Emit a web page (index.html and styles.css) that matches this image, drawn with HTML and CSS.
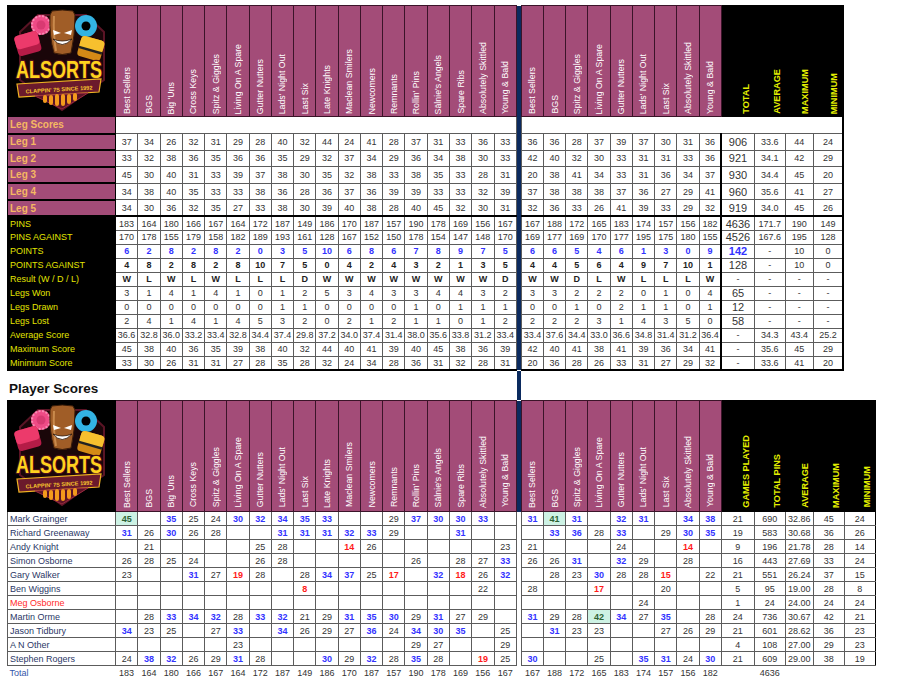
FILE: index.html
```html
<!DOCTYPE html>
<html lang="en">
<head>
<meta charset="utf-8">
<title>Alsorts Skittles - Scores</title>
<link rel="stylesheet" href="styles.css">
</head>
<body>
<table class="grid t1">
<colgroup><col class="lab"><col class="c"><col class="c"><col class="c"><col class="c"><col class="c"><col class="c"><col class="c"><col class="c"><col class="c"><col class="c"><col class="c"><col class="c"><col class="c"><col class="c"><col class="c"><col class="c"><col class="c"><col class="c"><col class="sp"><col class="d"><col class="d"><col class="d"><col class="d"><col class="d"><col class="d"><col class="d"><col class="d"><col class="d"><col class="w33"><col class="w31"><col class="w28"><col class="w30"></colgroup>
<thead>
<tr class="hdr"><th class="logo"><svg viewBox="0 0 107 110" width="107" height="110" role="img" aria-label="Alsorts logo">
<path d="M12 26 L30 9 L78 9 L96 26 L96 74 L54 104 L12 74 Z" fill="#1a0609" stroke="#5a1425" stroke-width="2"/>
<circle cx="33" cy="19" r="10" fill="#ef4b86"/><circle cx="33" cy="19" r="9" fill="none" stroke="#f88bb3" stroke-width="2" stroke-dasharray="2 1.6"/><circle cx="33" cy="19" r="4.5" fill="#d93a72"/>
<g transform="rotate(-16 20 38)"><rect x="8" y="27" width="24" height="21" rx="4" fill="#b51c47"/><rect x="8" y="27" width="24" height="14" rx="4" fill="#ec3a6b"/></g>
<circle cx="78" cy="20" r="11" fill="#33b3e3"/><circle cx="78" cy="20" r="4.5" fill="#000"/>
<g transform="rotate(16 83 42)"><rect x="71" y="32" width="24" height="21" rx="4" fill="#d48a16"/><rect x="71" y="32" width="24" height="13" rx="4" fill="#f7c02e"/><rect x="71" y="43" width="24" height="2.5" fill="#222"/></g>
<path d="M44 5 Q54 3 65 5 L67 9 Q67 30 63 47 Q54 50 46 47 Q41 30 42 9 Z" fill="#a05d27" stroke="#3a1c08" stroke-width="1"/>
<path d="M46 10 Q45 28 48 45" stroke="#c98a4c" stroke-width="2" fill="none"/>
<path d="M45 24 L53 27 L46 29 Z" fill="#fff"/><path d="M64 24 L56 27 L63 29 Z" fill="#fff"/>
<path d="M45 33 Q54 44 64 33 Q54 37 45 33 Z" fill="#fff" stroke="#2a1204" stroke-width="0.8"/>
<text x="51" y="55.4" transform="scale(1 1.3)" text-anchor="middle" font-family="Liberation Sans, Arial, sans-serif" font-weight="bold" font-size="18" fill="#ffd21e" stroke="#4b0e1c" stroke-width="1.8" paint-order="stroke" stroke-linejoin="round">ALSORTS</text>
<path d="M9 78 L93 73 L91 86 L11 91 Z" fill="#6b1a2c" stroke="#f0b323" stroke-width="1.2"/>
<text x="51" y="85.5" text-anchor="middle" font-family="Liberation Sans, Arial, sans-serif" font-weight="bold" font-size="5.6" fill="#f6c42c" transform="rotate(-3.5 51 83)">CLAPPIN' 7S SINCE 1992</text>
<path d="M27 90 L80 87 L54 103 Z" fill="#5b1326" stroke="#9a2a40" stroke-width="1"/>
<g fill="#f39a1c"><rect x="35" y="89" width="4" height="8" rx="2"/><rect x="41" y="89" width="4" height="10" rx="2"/><rect x="47" y="88" width="4" height="12" rx="2"/><rect x="53" y="88" width="4" height="12" rx="2"/><rect x="59" y="88" width="4" height="10" rx="2"/><rect x="65" y="87" width="4" height="8" rx="2"/></g>
</svg></th><th class="h"><div class="rot">Best Sellers</div></th><th class="h"><div class="rot">BGS</div></th><th class="h"><div class="rot">Big 'Uns</div></th><th class="h"><div class="rot">Cross Keys</div></th><th class="h"><div class="rot">Spitz &amp; Giggles</div></th><th class="h"><div class="rot">Living On A Spare</div></th><th class="h"><div class="rot">Gutter Nutters</div></th><th class="h"><div class="rot">Lads' Night Out</div></th><th class="h"><div class="rot">Last Six</div></th><th class="h"><div class="rot">Late Knights</div></th><th class="h"><div class="rot">Maclean Smilers</div></th><th class="h"><div class="rot">Newcomers</div></th><th class="h"><div class="rot">Remnants</div></th><th class="h"><div class="rot">Rollin' Pins</div></th><th class="h"><div class="rot">Sälnie's Angels</div></th><th class="h"><div class="rot">Spare Ribs</div></th><th class="h"><div class="rot">Absolutely Skittled</div></th><th class="h"><div class="rot">Young &amp; Bald</div></th><th class="sep"></th><th class="h"><div class="rot">Best Sellers</div></th><th class="h"><div class="rot">BGS</div></th><th class="h"><div class="rot">Spitz &amp; Giggles</div></th><th class="h"><div class="rot">Living On A Spare</div></th><th class="h"><div class="rot">Gutter Nutters</div></th><th class="h"><div class="rot">Lads' Night Out</div></th><th class="h"><div class="rot">Last Six</div></th><th class="h"><div class="rot">Absolutely Skittled</div></th><th class="h"><div class="rot">Young &amp; Bald</div></th><th class="k"><div class="rot">TOTAL</div></th><th class="k"><div class="rot">AVERAGE</div></th><th class="k"><div class="rot">MAXIMUM</div></th><th class="k"><div class="rot">MINIMUM</div></th></tr>
</thead>
<tbody>
<tr class="ls"><th class="lab">Leg Scores</th><td class="blank" colspan="18"></td><td class="sep"></td><td class="blank" colspan="13"></td></tr>
<tr class="leg v"><th class="lab">Leg 1</th><td>37</td><td>34</td><td>26</td><td>32</td><td>31</td><td>29</td><td>28</td><td>40</td><td>32</td><td>44</td><td>24</td><td>41</td><td>28</td><td>37</td><td>31</td><td>33</td><td>36</td><td>33</td><td class="sep"></td><td>36</td><td>36</td><td>28</td><td>37</td><td>39</td><td>37</td><td>30</td><td>31</td><td>36</td><td>906</td><td>33.6</td><td>44</td><td>24</td></tr>
<tr class="leg v"><th class="lab">Leg 2</th><td>33</td><td>32</td><td>38</td><td>36</td><td>35</td><td>36</td><td>36</td><td>35</td><td>29</td><td>32</td><td>37</td><td>34</td><td>29</td><td>36</td><td>34</td><td>38</td><td>30</td><td>33</td><td class="sep"></td><td>42</td><td>40</td><td>32</td><td>30</td><td>33</td><td>31</td><td>31</td><td>33</td><td>36</td><td>921</td><td>34.1</td><td>42</td><td>29</td></tr>
<tr class="leg v"><th class="lab">Leg 3</th><td>45</td><td>30</td><td>40</td><td>31</td><td>33</td><td>39</td><td>37</td><td>38</td><td>30</td><td>35</td><td>32</td><td>38</td><td>33</td><td>38</td><td>35</td><td>33</td><td>28</td><td>31</td><td class="sep"></td><td>20</td><td>38</td><td>41</td><td>34</td><td>33</td><td>31</td><td>36</td><td>34</td><td>37</td><td>930</td><td>34.4</td><td>45</td><td>20</td></tr>
<tr class="leg v"><th class="lab">Leg 4</th><td>34</td><td>38</td><td>40</td><td>35</td><td>33</td><td>33</td><td>38</td><td>36</td><td>28</td><td>36</td><td>37</td><td>36</td><td>39</td><td>39</td><td>33</td><td>33</td><td>32</td><td>39</td><td class="sep"></td><td>37</td><td>38</td><td>38</td><td>38</td><td>37</td><td>36</td><td>27</td><td>29</td><td>41</td><td>960</td><td>35.6</td><td>41</td><td>27</td></tr>
<tr class="leg v l5"><th class="lab">Leg 5</th><td>34</td><td>30</td><td>36</td><td>32</td><td>35</td><td>27</td><td>33</td><td>38</td><td>30</td><td>39</td><td>40</td><td>38</td><td>28</td><td>40</td><td>45</td><td>32</td><td>30</td><td>31</td><td class="sep"></td><td>32</td><td>36</td><td>33</td><td>26</td><td>41</td><td>39</td><td>33</td><td>29</td><td>32</td><td>919</td><td>34.0</td><td>45</td><td>26</td></tr>
<tr class="st v"><th class="sl">PINS</th><td>183</td><td>164</td><td>180</td><td>166</td><td>167</td><td>164</td><td>172</td><td>187</td><td>149</td><td>186</td><td>170</td><td>187</td><td>157</td><td>190</td><td>178</td><td>169</td><td>156</td><td>167</td><td class="sep"></td><td>167</td><td>188</td><td>172</td><td>165</td><td>183</td><td>174</td><td>157</td><td>156</td><td>182</td><td>4636</td><td>171.7</td><td>190</td><td>149</td></tr>
<tr class="st v"><th class="sl">PINS AGAINST</th><td>170</td><td>178</td><td>155</td><td>179</td><td>158</td><td>182</td><td>189</td><td>193</td><td>161</td><td>128</td><td>167</td><td>152</td><td>150</td><td>178</td><td>154</td><td>147</td><td>148</td><td>170</td><td class="sep"></td><td>169</td><td>177</td><td>169</td><td>170</td><td>177</td><td>195</td><td>175</td><td>180</td><td>155</td><td>4526</td><td>167.6</td><td>195</td><td>128</td></tr>
<tr class="st v pts"><th class="sl">POINTS</th><td>6</td><td>2</td><td>8</td><td>2</td><td>8</td><td>2</td><td>0</td><td>3</td><td>5</td><td>10</td><td>6</td><td>8</td><td>6</td><td>7</td><td>8</td><td>9</td><td>7</td><td>5</td><td class="sep"></td><td>6</td><td>6</td><td>5</td><td>4</td><td>6</td><td>1</td><td>3</td><td>0</td><td>9</td><td>142</td><td>-</td><td>10</td><td>0</td></tr>
<tr class="st v bold"><th class="sl">POINTS AGAINST</th><td>4</td><td>8</td><td>2</td><td>8</td><td>2</td><td>8</td><td>10</td><td>7</td><td>5</td><td>0</td><td>4</td><td>2</td><td>4</td><td>3</td><td>2</td><td>1</td><td>3</td><td>5</td><td class="sep"></td><td>4</td><td>4</td><td>5</td><td>6</td><td>4</td><td>9</td><td>7</td><td>10</td><td>1</td><td>128</td><td>-</td><td>10</td><td>0</td></tr>
<tr class="st v bold"><th class="sl">Result (W / D / L)</th><td>W</td><td>L</td><td>W</td><td>L</td><td>W</td><td>L</td><td>L</td><td>L</td><td>D</td><td>W</td><td>W</td><td>W</td><td>W</td><td>W</td><td>W</td><td>W</td><td>W</td><td>D</td><td class="sep"></td><td>W</td><td>W</td><td>D</td><td>L</td><td>W</td><td>L</td><td>L</td><td>L</td><td>W</td><td class="dash">-</td><td>-</td><td>-</td><td>-</td></tr>
<tr class="st v"><th class="sl">Legs Won</th><td>3</td><td>1</td><td>4</td><td>1</td><td>4</td><td>1</td><td>0</td><td>1</td><td>2</td><td>5</td><td>3</td><td>4</td><td>3</td><td>3</td><td>4</td><td>4</td><td>3</td><td>2</td><td class="sep"></td><td>3</td><td>3</td><td>2</td><td>2</td><td>2</td><td>0</td><td>1</td><td>0</td><td>4</td><td>65</td><td>-</td><td>-</td><td>-</td></tr>
<tr class="st v"><th class="sl">Legs Drawn</th><td>0</td><td>0</td><td>0</td><td>0</td><td>0</td><td>0</td><td>0</td><td>1</td><td>1</td><td>0</td><td>0</td><td>0</td><td>0</td><td>1</td><td>0</td><td>1</td><td>1</td><td>1</td><td class="sep"></td><td>0</td><td>0</td><td>1</td><td>0</td><td>2</td><td>1</td><td>1</td><td>0</td><td>1</td><td>12</td><td>-</td><td>-</td><td>-</td></tr>
<tr class="st v"><th class="sl">Legs Lost</th><td>2</td><td>4</td><td>1</td><td>4</td><td>1</td><td>4</td><td>5</td><td>3</td><td>2</td><td>0</td><td>2</td><td>1</td><td>2</td><td>1</td><td>1</td><td>0</td><td>1</td><td>2</td><td class="sep"></td><td>2</td><td>2</td><td>2</td><td>3</td><td>1</td><td>4</td><td>3</td><td>5</td><td>0</td><td>58</td><td>-</td><td>-</td><td>-</td></tr>
<tr class="st v"><th class="sl">Average Score</th><td>36.6</td><td>32.8</td><td>36.0</td><td>33.2</td><td>33.4</td><td>32.8</td><td>34.4</td><td>37.4</td><td>29.8</td><td>37.2</td><td>34.0</td><td>37.4</td><td>31.4</td><td>38.0</td><td>35.6</td><td>33.8</td><td>31.2</td><td>33.4</td><td class="sep"></td><td>33.4</td><td>37.6</td><td>34.4</td><td>33.0</td><td>36.6</td><td>34.8</td><td>31.4</td><td>31.2</td><td>36.4</td><td class="dash">-</td><td>34.3</td><td>43.4</td><td>25.2</td></tr>
<tr class="st v"><th class="sl">Maximum Score</th><td>45</td><td>38</td><td>40</td><td>36</td><td>35</td><td>39</td><td>38</td><td>40</td><td>32</td><td>44</td><td>40</td><td>41</td><td>39</td><td>40</td><td>45</td><td>38</td><td>36</td><td>39</td><td class="sep"></td><td>42</td><td>40</td><td>41</td><td>38</td><td>41</td><td>39</td><td>36</td><td>34</td><td>41</td><td class="dash">-</td><td>35.6</td><td>45</td><td>29</td></tr>
<tr class="st v"><th class="sl">Minimum Score</th><td>33</td><td>30</td><td>26</td><td>31</td><td>31</td><td>27</td><td>28</td><td>35</td><td>28</td><td>32</td><td>24</td><td>34</td><td>28</td><td>36</td><td>31</td><td>32</td><td>28</td><td>31</td><td class="sep"></td><td>20</td><td>36</td><td>28</td><td>26</td><td>33</td><td>31</td><td>27</td><td>29</td><td>32</td><td class="dash">-</td><td>33.6</td><td>41</td><td>20</td></tr>
</tbody>
</table>

<h2 class="ps">Player Scores</h2>

<table class="grid t2">
<colgroup><col class="lab"><col class="c"><col class="c"><col class="c"><col class="c"><col class="c"><col class="c"><col class="c"><col class="c"><col class="c"><col class="c"><col class="c"><col class="c"><col class="c"><col class="c"><col class="c"><col class="c"><col class="c"><col class="c"><col class="sp"><col class="d"><col class="d"><col class="d"><col class="d"><col class="d"><col class="d"><col class="d"><col class="d"><col class="d"><col class="w33"><col class="w31"><col class="w28"><col class="w31"><col class="w31"></colgroup>
<thead>
<tr class="hdr"><th class="logo"><svg viewBox="0 0 107 110" width="107" height="110" role="img" aria-label="Alsorts logo">
<path d="M12 26 L30 9 L78 9 L96 26 L96 74 L54 104 L12 74 Z" fill="#1a0609" stroke="#5a1425" stroke-width="2"/>
<circle cx="33" cy="19" r="10" fill="#ef4b86"/><circle cx="33" cy="19" r="9" fill="none" stroke="#f88bb3" stroke-width="2" stroke-dasharray="2 1.6"/><circle cx="33" cy="19" r="4.5" fill="#d93a72"/>
<g transform="rotate(-16 20 38)"><rect x="8" y="27" width="24" height="21" rx="4" fill="#b51c47"/><rect x="8" y="27" width="24" height="14" rx="4" fill="#ec3a6b"/></g>
<circle cx="78" cy="20" r="11" fill="#33b3e3"/><circle cx="78" cy="20" r="4.5" fill="#000"/>
<g transform="rotate(16 83 42)"><rect x="71" y="32" width="24" height="21" rx="4" fill="#d48a16"/><rect x="71" y="32" width="24" height="13" rx="4" fill="#f7c02e"/><rect x="71" y="43" width="24" height="2.5" fill="#222"/></g>
<path d="M44 5 Q54 3 65 5 L67 9 Q67 30 63 47 Q54 50 46 47 Q41 30 42 9 Z" fill="#a05d27" stroke="#3a1c08" stroke-width="1"/>
<path d="M46 10 Q45 28 48 45" stroke="#c98a4c" stroke-width="2" fill="none"/>
<path d="M45 24 L53 27 L46 29 Z" fill="#fff"/><path d="M64 24 L56 27 L63 29 Z" fill="#fff"/>
<path d="M45 33 Q54 44 64 33 Q54 37 45 33 Z" fill="#fff" stroke="#2a1204" stroke-width="0.8"/>
<text x="51" y="55.4" transform="scale(1 1.3)" text-anchor="middle" font-family="Liberation Sans, Arial, sans-serif" font-weight="bold" font-size="18" fill="#ffd21e" stroke="#4b0e1c" stroke-width="1.8" paint-order="stroke" stroke-linejoin="round">ALSORTS</text>
<path d="M9 78 L93 73 L91 86 L11 91 Z" fill="#6b1a2c" stroke="#f0b323" stroke-width="1.2"/>
<text x="51" y="85.5" text-anchor="middle" font-family="Liberation Sans, Arial, sans-serif" font-weight="bold" font-size="5.6" fill="#f6c42c" transform="rotate(-3.5 51 83)">CLAPPIN' 7S SINCE 1992</text>
<path d="M27 90 L80 87 L54 103 Z" fill="#5b1326" stroke="#9a2a40" stroke-width="1"/>
<g fill="#f39a1c"><rect x="35" y="89" width="4" height="8" rx="2"/><rect x="41" y="89" width="4" height="10" rx="2"/><rect x="47" y="88" width="4" height="12" rx="2"/><rect x="53" y="88" width="4" height="12" rx="2"/><rect x="59" y="88" width="4" height="10" rx="2"/><rect x="65" y="87" width="4" height="8" rx="2"/></g>
</svg></th><th class="h"><div class="rot">Best Sellers</div></th><th class="h"><div class="rot">BGS</div></th><th class="h"><div class="rot">Big 'Uns</div></th><th class="h"><div class="rot">Cross Keys</div></th><th class="h"><div class="rot">Spitz &amp; Giggles</div></th><th class="h"><div class="rot">Living On A Spare</div></th><th class="h"><div class="rot">Gutter Nutters</div></th><th class="h"><div class="rot">Lads' Night Out</div></th><th class="h"><div class="rot">Last Six</div></th><th class="h"><div class="rot">Late Knights</div></th><th class="h"><div class="rot">Maclean Smilers</div></th><th class="h"><div class="rot">Newcomers</div></th><th class="h"><div class="rot">Remnants</div></th><th class="h"><div class="rot">Rollin' Pins</div></th><th class="h"><div class="rot">Sälnie's Angels</div></th><th class="h"><div class="rot">Spare Ribs</div></th><th class="h"><div class="rot">Absolutely Skittled</div></th><th class="h"><div class="rot">Young &amp; Bald</div></th><th class="sep"></th><th class="h"><div class="rot">Best Sellers</div></th><th class="h"><div class="rot">BGS</div></th><th class="h"><div class="rot">Spitz &amp; Giggles</div></th><th class="h"><div class="rot">Living On A Spare</div></th><th class="h"><div class="rot">Gutter Nutters</div></th><th class="h"><div class="rot">Lads' Night Out</div></th><th class="h"><div class="rot">Last Six</div></th><th class="h"><div class="rot">Absolutely Skittled</div></th><th class="h"><div class="rot">Young &amp; Bald</div></th><th class="k"><div class="rot">GAMES PLAYED</div></th><th class="k"><div class="rot">TOTAL PINS</div></th><th class="k"><div class="rot">AVERAGE</div></th><th class="k"><div class="rot">MAXIMUM</div></th><th class="k"><div class="rot">MINIMUM</div></th></tr>
</thead>
<tbody>
<tr class="pl"><th class="pn">Mark Grainger</th><td class="g">45</td><td></td><td class="b">35</td><td>25</td><td>24</td><td class="b">30</td><td class="b">32</td><td class="b">34</td><td class="b">35</td><td class="b">33</td><td></td><td></td><td>29</td><td class="b">37</td><td class="b">30</td><td class="b">30</td><td class="b">33</td><td></td><td class="sep"></td><td class="b">31</td><td class="g">41</td><td class="b">31</td><td></td><td class="b">32</td><td class="b">31</td><td></td><td class="b">34</td><td class="b">38</td><td>21</td><td>690</td><td>32.86</td><td>45</td><td>24</td></tr>
<tr class="pl"><th class="pn">Richard Greenaway</th><td class="b">31</td><td>26</td><td class="b">30</td><td>26</td><td>28</td><td></td><td></td><td class="b">31</td><td class="b">31</td><td class="b">31</td><td class="b">32</td><td class="b">33</td><td>29</td><td></td><td></td><td class="b">31</td><td></td><td></td><td class="sep"></td><td></td><td class="b">33</td><td class="b">36</td><td>28</td><td class="b">33</td><td></td><td>29</td><td class="b">30</td><td class="b">35</td><td>19</td><td>583</td><td>30.68</td><td>36</td><td>26</td></tr>
<tr class="pl"><th class="pn">Andy Knight</th><td></td><td>21</td><td></td><td></td><td></td><td></td><td>25</td><td>28</td><td></td><td></td><td class="r">14</td><td>26</td><td></td><td></td><td></td><td></td><td></td><td>23</td><td class="sep"></td><td>21</td><td></td><td></td><td></td><td>24</td><td></td><td></td><td class="r">14</td><td></td><td>9</td><td>196</td><td>21.78</td><td>28</td><td>14</td></tr>
<tr class="pl"><th class="pn">Simon Osborne</th><td>26</td><td>28</td><td>25</td><td>24</td><td></td><td></td><td>26</td><td>28</td><td></td><td></td><td></td><td></td><td></td><td>26</td><td></td><td>28</td><td>27</td><td class="b">33</td><td class="sep"></td><td>26</td><td>26</td><td class="b">31</td><td></td><td class="b">32</td><td>29</td><td></td><td>28</td><td></td><td>16</td><td>443</td><td>27.69</td><td>33</td><td>24</td></tr>
<tr class="pl"><th class="pn">Gary Walker</th><td>23</td><td></td><td></td><td class="b">31</td><td>27</td><td class="r">19</td><td>28</td><td></td><td>28</td><td class="b">34</td><td class="b">37</td><td>25</td><td class="r">17</td><td></td><td class="b">32</td><td class="r">18</td><td>26</td><td class="b">32</td><td class="sep"></td><td></td><td>28</td><td>23</td><td class="b">30</td><td>28</td><td>28</td><td class="r">15</td><td></td><td>22</td><td>21</td><td>551</td><td>26.24</td><td>37</td><td>15</td></tr>
<tr class="pl"><th class="pn">Ben Wiggins</th><td></td><td></td><td></td><td></td><td></td><td></td><td></td><td></td><td class="r">8</td><td></td><td></td><td></td><td></td><td></td><td></td><td></td><td>22</td><td></td><td class="sep"></td><td>28</td><td></td><td></td><td class="r">17</td><td></td><td></td><td>20</td><td></td><td></td><td>5</td><td>95</td><td>19.00</td><td>28</td><td>8</td></tr>
<tr class="pl"><th class="pn red">Meg Osborne</th><td></td><td></td><td></td><td></td><td></td><td></td><td></td><td></td><td></td><td></td><td></td><td></td><td></td><td></td><td></td><td></td><td></td><td></td><td class="sep"></td><td></td><td></td><td></td><td></td><td></td><td>24</td><td></td><td></td><td></td><td>1</td><td>24</td><td>24.00</td><td>24</td><td>24</td></tr>
<tr class="pl"><th class="pn">Martin Orme</th><td></td><td>28</td><td class="b">33</td><td class="b">34</td><td class="b">32</td><td>28</td><td class="b">33</td><td class="b">32</td><td>21</td><td>29</td><td class="b">31</td><td class="b">35</td><td class="b">30</td><td>29</td><td class="b">31</td><td>27</td><td>29</td><td></td><td class="sep"></td><td class="b">31</td><td>29</td><td>28</td><td class="g">42</td><td class="b">34</td><td>27</td><td class="b">35</td><td></td><td>28</td><td>24</td><td>736</td><td>30.67</td><td>42</td><td>21</td></tr>
<tr class="pl"><th class="pn">Jason Tidbury</th><td class="b">34</td><td>23</td><td>25</td><td></td><td>27</td><td class="b">33</td><td></td><td class="b">34</td><td>26</td><td>29</td><td>27</td><td class="b">36</td><td>24</td><td class="b">34</td><td class="b">30</td><td class="b">35</td><td></td><td>25</td><td class="sep"></td><td></td><td class="b">31</td><td>23</td><td>23</td><td></td><td></td><td>27</td><td>26</td><td>29</td><td>21</td><td>601</td><td>28.62</td><td>36</td><td>23</td></tr>
<tr class="pl"><th class="pn">A N Other</th><td></td><td></td><td></td><td></td><td></td><td>23</td><td></td><td></td><td></td><td></td><td></td><td></td><td></td><td>29</td><td>27</td><td></td><td></td><td>29</td><td class="sep"></td><td></td><td></td><td></td><td></td><td></td><td></td><td></td><td></td><td></td><td>4</td><td>108</td><td>27.00</td><td>29</td><td>23</td></tr>
<tr class="pl"><th class="pn">Stephen Rogers</th><td>24</td><td class="b">38</td><td class="b">32</td><td>26</td><td>29</td><td class="b">31</td><td>28</td><td></td><td></td><td class="b">30</td><td>29</td><td class="b">32</td><td>28</td><td class="b">35</td><td>28</td><td></td><td class="r">19</td><td>25</td><td class="sep"></td><td class="b">30</td><td></td><td></td><td>25</td><td></td><td class="b">35</td><td class="b">31</td><td>24</td><td class="b">30</td><td>21</td><td>609</td><td>29.00</td><td>38</td><td>19</td></tr>
<tr class="tot"><th class="tl">Total</th><td>183</td><td>164</td><td>180</td><td>166</td><td>167</td><td>164</td><td>172</td><td>187</td><td>149</td><td>186</td><td>170</td><td>187</td><td>157</td><td>190</td><td>178</td><td>169</td><td>156</td><td>167</td><td class="sep"></td><td>167</td><td>188</td><td>172</td><td>165</td><td>183</td><td>174</td><td>157</td><td>156</td><td>182</td><td></td><td>4636</td><td></td><td></td><td></td></tr>
</tbody>
</table>
</body>
</html>
```

FILE: styles.css
```css
* { box-sizing: border-box; }
html, body { background: #fff; }
body {
  margin: 0;
  padding: 5px 0 0 7px;
  font-family: "Liberation Sans", Arial, sans-serif;
  font-size: 9px;
  color: #333;
}

.grid { border-collapse: collapse; table-layout: fixed; }
.t1 { width: 836px; }
.t2 { width: 868px; }
.grid col.lab { width: 108px; }
.grid col.c { width: 22.28px; }
.grid col.sp { width: 5px; }
.grid col.d { width: 22.22px; }
.grid col.w33 { width: 33px; }
.grid col.w31 { width: 31px; }
.grid col.w30 { width: 30px; }
.grid col.w28 { width: 28px; }

.grid td {
  border: 1px solid #5c5c5c;
  padding: 0;
  text-align: center;
  vertical-align: middle;
  font-size: 9px;
  color: #333;
  white-space: nowrap;
  overflow: hidden;
}
.grid th { padding: 0; font-weight: normal; white-space: nowrap; }

.hdr { height: 110px; }
.ls { height: 17px; }
.leg { height: 16.6px; }
.st, .pl, .tot { height: 14px; }

/* header */
.grid th.logo { background: #000; border: 1px solid #000; vertical-align: top; }
.logo svg { display: block; }
.grid th.h {
  background: #a34c78;
  border: 1px solid #3b1429;
  vertical-align: bottom;
  padding-bottom: 2px;
}
.grid th.k {
  background: #000;
  border: 1px solid #000;
  vertical-align: bottom;
  padding: 0 3px 2px 0;
}
.rot {
  display: block;
  writing-mode: vertical-rl;
  transform: rotate(180deg);
  white-space: nowrap;
  width: 10px;
  line-height: 10px;
  margin: 0 auto;
  color: #fff;
  font-size: 8.8px;
}
.k .rot { margin: 0 0 0 auto; color: #e3ef00; font-weight: bold; font-size: 9.2px; }
.t2 th.h, .t2 th.k { padding-bottom: 4px; }

/* separator */
.grid td.sep, .grid th.sep {
  background: #0b2a5e;
  padding: 0;
  border-top: none;
  border-bottom: none;
}

/* labels */
.grid th.lab {
  background: #a34c78;
  color: #f5b862;
  font-weight: bold;
  font-size: 10px;
  text-align: left;
  padding: 0 0 0 2px;
  border: 1px solid #000;
  border-bottom: 2px solid #000;
}
.grid th.sl {
  background: #000;
  color: #e2e500;
  font-size: 9px;
  text-align: left;
  padding: 0 0 0 2px;
  border: 1px solid #000;
}
.grid td.blank { border-left: none; border-right: none; border-top: 1px solid #333; }

/* leg table emphasis */
.t1 tr.v > td:nth-child(30) { border-left: 2px solid #000; font-size: 11px; }
.t1 tr.v > td.dash { font-size: 9px; }
.t1 tr.l5 > th, .t1 tr.l5 > td:not(.sep) { border-bottom: 2px solid #000; }
.t1 tr > :last-child { border-right: 2px solid #000; }
.t1 tbody tr:last-child > :not(.sep) { border-bottom: 2px solid #000; }
.t1 tr.pts td { color: #3333ff; font-weight: bold; }
.t1 tr.pts td:nth-child(n+31) { color: #333; font-weight: normal; }
.t1 tr.bold td { color: #222; font-weight: bold; }
.t1 tr.bold td:nth-child(n+30) { color: #333; font-weight: normal; }

/* heading */
.ps {
  margin: 0;
  height: 29px;
  padding: 10px 0 0 2px;
  font-size: 13.5px;
  font-weight: bold;
  line-height: 16px;
  color: #111;
  background: linear-gradient(#0b2a5e, #0b2a5e) no-repeat 509.5px 0 / 4px 100%;
}

/* player table */
.grid th.pn {
  text-align: left;
  padding: 0 0 0 2px;
  color: #2b3766;
  font-size: 9px;
  border: 1px solid #5c5c5c;
  background: #fff;
}
.grid th.pn.red { color: #ff2b2b; }
.grid td.b { color: #3333ff; font-weight: bold; }
.grid td.r { color: #ff1a1a; font-weight: bold; }
.grid td.g { background: #cdf2e4; color: #2d6234; font-weight: bold; }
.t2 tbody td.sep { background: #fff; }
.t2 tr.pl > :last-child { border-right: 1px solid #000; }
.t2 tr.tot > * { border: none; }
.grid th.tl { text-align: left; padding: 0 0 0 2px; color: #3355aa; font-size: 9px; }
```
